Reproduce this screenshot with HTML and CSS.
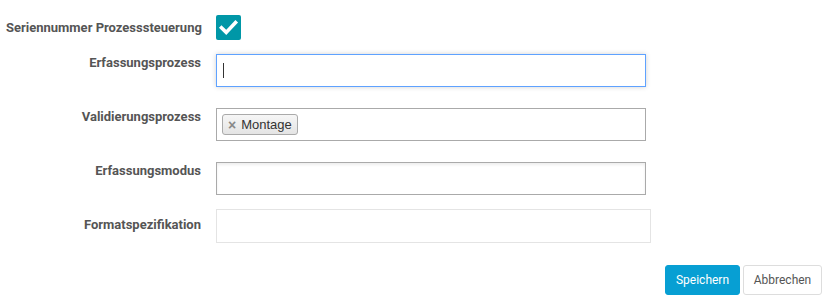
FILE: index.html
```html
<!DOCTYPE html>
<html>
<head>
<meta charset="utf-8">
<link rel="stylesheet" href="styles.css">
</head>
<body>
<form class="form">
  <div class="row row-check">
    <label class="lbl">Seriennummer Prozesssteuerung</label>
    <span class="checkbox">
      <svg width="25" height="25" viewBox="0 0 25 25"><path d="M5.5 12.8 L10.2 17.4 L19.5 7.6" fill="none" stroke="#fff" stroke-width="3.6" stroke-linecap="square" stroke-linejoin="miter"/></svg>
    </span>
  </div>
  <div class="row">
    <label class="lbl">Erfassungsprozess</label>
    <div class="field field-focus"><span class="caret"></span></div>
  </div>
  <div class="row">
    <label class="lbl">Validierungsprozess</label>
    <div class="field field-tags">
      <span class="tag"><span class="tag-x">×</span>Montage</span>
    </div>
  </div>
  <div class="row row-tight">
    <label class="lbl">Erfassungsmodus</label>
    <div class="field field-inset"></div>
  </div>
  <div class="row row-last">
    <label class="lbl lbl-pad">Formatspezifikation</label>
    <div class="field field-light"></div>
  </div>
  <div class="actions">
    <button type="button" class="btn btn-primary">Speichern</button>
    <button type="button" class="btn btn-default">Abbrechen</button>
  </div>
</form>
</body>
</html>
```
FILE: styles.css
```css
html, body {
  margin: 0;
  padding: 0;
  background: #fff;
}
.form {
  padding: 15px 9px 0 6px;
  font-family: Roboto, "Liberation Sans", Arial, sans-serif;
}
.row {
  display: grid;
  grid-template-columns: 195px 430px;
  column-gap: 15px;
  align-items: start;
  margin-bottom: 21px;
}
.row-check {
  align-items: center;
  margin-bottom: 14px;
}
.row-tight {
  margin-bottom: 14px;
}
.row-last {
  grid-template-columns: 195px 435px;
  margin-bottom: 22px;
}
.lbl {
  font-size: 13px;
  font-weight: bold;
  line-height: 18px;
  color: #555;
  text-align: right;
  white-space: nowrap;
}
.lbl-pad {
  padding-top: 7px;
}
.checkbox {
  width: 25px;
  height: 25px;
  border-radius: 2px;
  background: #0097a7;
  display: block;
}
.checkbox svg {
  display: block;
}
.field {
  box-sizing: border-box;
  height: 33px;
  border: 1px solid #aaa;
  background: #fff;
  display: flex;
  align-items: center;
}
.field-focus {
  border-color: #5fa2ff;
  box-shadow: 0 0 5px rgba(0, 0, 0, 0.18);
  padding-left: 6px;
}
.caret {
  width: 1px;
  height: 15px;
  background: #333;
}
.field-tags {
  padding-left: 5px;
}
.field-inset {
  box-shadow: inset 0 2px 3px rgba(0, 0, 0, 0.07);
}
.field-light {
  height: 34px;
  border-color: #e4e4e4;
}
.tag {
  box-sizing: border-box;
  height: 21px;
  display: inline-flex;
  align-items: center;
  padding: 0 5px 0 5px;
  border: 1px solid #aaa;
  border-radius: 3px;
  background: linear-gradient(#f6f6f6, #e4e4e4);
  font-family: "Liberation Sans", Arial, sans-serif;
  font-size: 13px;
  color: #333;
}
.tag-x {
  font-weight: bold;
  color: #888;
  font-size: 14px;
  margin-right: 5px;
}
.actions {
  display: flex;
  justify-content: flex-end;
  gap: 3px;
}
.btn {
  box-sizing: border-box;
  height: 30px;
  border-radius: 3px;
  font-family: Roboto, "Liberation Sans", Arial, sans-serif;
  font-size: 12px;
  padding: 0;
  cursor: pointer;
}
.btn-primary {
  width: 75px;
  background: #079fd3;
  border: 1px solid #079fd3;
  color: #fff;
}
.btn-default {
  width: 79px;
  background: #fff;
  border: 1px solid #ddd;
  color: #555;
}
```
